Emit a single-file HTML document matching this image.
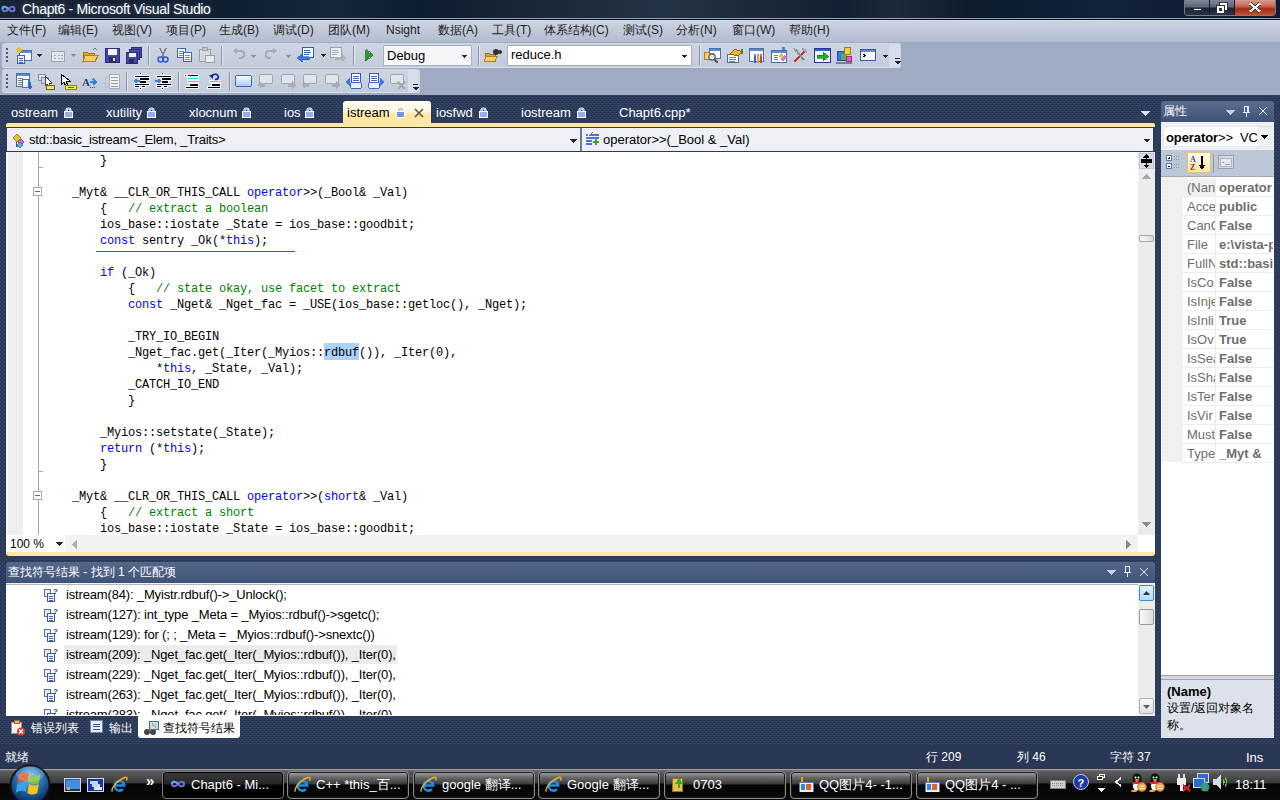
<!DOCTYPE html><html><head><meta charset="utf-8"><style>
*{margin:0;padding:0;box-sizing:border-box}
html,body{width:1280px;height:800px;overflow:hidden}
body{position:relative;background:#293955;font-family:"Liberation Sans",sans-serif;font-size:12px;color:#000}
.a{position:absolute;display:block}
svg{shape-rendering:crispEdges}
svg text,svg circle,svg ellipse{shape-rendering:auto}
.t{position:absolute;white-space:nowrap;line-height:14px}
.pat{background-color:#2b3b59;background-image:conic-gradient(at 1px 1px,transparent 75%,#3d4f72 0),conic-gradient(at 1px 1px,transparent 75%,#3d4f72 0),conic-gradient(at 1px 1px,transparent 75%,#25334f 0),conic-gradient(at 1px 1px,transparent 75%,#25334f 0);background-size:4px 4px;background-position:2px 0,0 2px,2px 3px,0 1px}
.code{position:absolute;left:38px;top:1px;font-family:"Liberation Mono",monospace;font-size:12px;letter-spacing:-0.2px;line-height:16px;white-space:pre;color:#000}
.k{color:#0000ff}.c{color:#008000}
.mi{position:absolute;top:23px;font-size:12px;color:#1e1e1e;white-space:nowrap;line-height:14px}
.tab{position:absolute;top:105px;color:#fff;font-size:13px;white-space:nowrap;line-height:15px}
</style></head><body>
<div class="a pat" style="left:0px;top:95px;width:1280px;height:673px;"></div>
<div class="a" style="left:0px;top:0px;width:1280px;height:18px;background:linear-gradient(90deg,#182536 0%,#111f32 18%,#172638 26%,#0f1d30 33%,#1d2b3d 45%,#243345 52%,#1a2839 60%,#122033 66%,#1c2a3b 70%,#0d1b2d 76%,#13213a 86%,#0f1c30 100%)"></div>
<div class="a" style="left:0px;top:18px;width:1280px;height:1px;background:#8e9cb0"></div>
<div class="a" style="left:0px;top:19px;width:1280px;height:1px;background:#0b1220"></div>
<svg class="a" style="left:0px;top:3px;shape-rendering:auto" width="18" height="12" viewBox="0 0 18 12"><path d="M2.5 6c0-3 3.5-3 6 0s6 3 6 0s-3.5-3-6 0s-6 3-6 0z" fill="none" stroke="#6a70d8" stroke-width="2"/><path d="M2.5 6c0-3 3.5-3 6 0" fill="none" stroke="#5aa8e8" stroke-width="2"/></svg>
<div class="t" style="left:22px;top:1px;color:#fff;font-size:14px;line-height:16px;letter-spacing:-0.35px;text-shadow:0 0 4px rgba(200,220,255,.35)">Chapt6 - Microsoft Visual Studio</div>
<div class="a" style="left:1184px;top:0px;width:92px;height:16px;border:1px solid #6c7a8e;border-top:none;border-radius:0 0 4px 4px;background:transparent"></div>
<div class="a" style="left:1185px;top:0px;width:24px;height:15px;background:linear-gradient(#7e8898 0%,#5c6677 45%,#1b2433 55%,#2b3546 100%);border-radius:0 0 0 3px"></div>
<div class="a" style="left:1193px;top:8px;width:9px;height:3px;background:#fff;border:1px solid #333"></div>
<div class="a" style="left:1210px;top:0px;width:24px;height:15px;background:linear-gradient(#7e8898 0%,#5c6677 45%,#1b2433 55%,#2b3546 100%)"></div>
<svg class="a" style="left:1215px;top:1px" width="14" height="13" viewBox="0 0 14 13"><rect x="4.5" y="1.5" width="8" height="8" fill="#fff" stroke="#333"/><rect x="1.5" y="4.5" width="8" height="8" fill="#fff" stroke="#333"/><rect x="4" y="7" width="3" height="3" fill="#333"/></svg>
<div class="a" style="left:1235px;top:0px;width:40px;height:15px;background:linear-gradient(#d99a8c 0%,#c46a55 40%,#a82a10 60%,#c45030 100%);border-radius:0 0 3px 0"></div>
<svg class="a" style="left:1248px;top:2px" width="14" height="11" viewBox="0 0 14 11"><path d="M2 1.5L12 9.5M12 1.5L2 9.5" stroke="#333" stroke-width="4"/><path d="M2 1.5L12 9.5M12 1.5L2 9.5" stroke="#fff" stroke-width="2.4"/></svg>
<div class="a" style="left:0px;top:20px;width:1280px;height:22px;background:linear-gradient(#d8deea 0,#cbd2e0 6%,#c3cbdb 40%,#b1bccf 100%)"></div>
<div class="mi" style="left:7px">文件(F)</div>
<div class="mi" style="left:58px">编辑(E)</div>
<div class="mi" style="left:112px">视图(V)</div>
<div class="mi" style="left:166px">项目(P)</div>
<div class="mi" style="left:219px">生成(B)</div>
<div class="mi" style="left:273px">调试(D)</div>
<div class="mi" style="left:328px">团队(M)</div>
<div class="mi" style="left:386px">Nsight</div>
<div class="mi" style="left:438px">数据(A)</div>
<div class="mi" style="left:492px">工具(T)</div>
<div class="mi" style="left:544px">体系结构(C)</div>
<div class="mi" style="left:623px">测试(S)</div>
<div class="mi" style="left:676px">分析(N)</div>
<div class="mi" style="left:732px">窗口(W)</div>
<div class="mi" style="left:789px">帮助(H)</div>
<div class="a" style="left:0px;top:42px;width:1280px;height:53px;background:#9eabc2"></div>
<div class="a" style="left:2px;top:43px;width:899px;height:25px;border-radius:3px;background:linear-gradient(#ced5e2,#c3cbda);box-shadow:inset 0 -1px 0 #d8dee8"></div>
<div class="a" style="left:889px;top:44px;width:11px;height:23px;background:#d8dee9;border-radius:0 3px 3px 0"></div>
<div class="a" style="left:2px;top:69px;width:418px;height:24px;border-radius:3px;background:linear-gradient(#ced5e2,#c3cbda);box-shadow:inset 0 -1px 0 #d8dee8"></div>
<div class="a" style="left:408px;top:70px;width:11px;height:22px;background:#d8dee9;border-radius:0 3px 3px 0"></div>
<div class="a" style="left:6px;top:48px;width:2px;height:2px;background:#4b5a74"></div>
<div class="a" style="left:6px;top:52px;width:2px;height:2px;background:#4b5a74"></div>
<div class="a" style="left:6px;top:56px;width:2px;height:2px;background:#4b5a74"></div>
<div class="a" style="left:6px;top:60px;width:2px;height:2px;background:#4b5a74"></div>
<div class="a" style="left:6px;top:74px;width:2px;height:2px;background:#4b5a74"></div>
<div class="a" style="left:6px;top:78px;width:2px;height:2px;background:#4b5a74"></div>
<div class="a" style="left:6px;top:82px;width:2px;height:2px;background:#4b5a74"></div>
<div class="a" style="left:6px;top:86px;width:2px;height:2px;background:#4b5a74"></div>
<svg class="a" style="left:16px;top:47px" width="17" height="17" viewBox="0 0 17 17"><rect x="3.5" y="3.5" width="12" height="10" fill="#fff" stroke="#4a6ea8"/><rect x="4" y="4" width="11" height="2" fill="#5b8ad6"/><path d="M1 1l4 4M5 1L1 5M3 0v6M0 3h6" stroke="#f0c020" stroke-width="1.2"/><rect x="1.5" y="8.5" width="7" height="8" fill="#e8f0ff" stroke="#3d64a8"/><path d="M3 11h4M3 13h4M3 15h4" stroke="#3d64a8"/></svg>
<svg class="a" style="left:37px;top:54px" width="5" height="3" viewBox="0 0 5 3"><path d="M0 0H5L2.5 3z" fill="#1e2a3c"/></svg>
<svg class="a" style="left:50px;top:48px" width="16" height="15" viewBox="0 0 16 15"><rect x="1.5" y="3.5" width="13" height="10" fill="#e4e6ea" stroke="#a0a6b0"/><path d="M4 7h2M8 7h2M11 7h2M4 10h2M8 10h2M11 10h2" stroke="#a0a6b0"/><path d="M1 0l3 3M4 0L1 3" stroke="#c8c8c8"/></svg>
<svg class="a" style="left:71px;top:54px" width="5" height="3" viewBox="0 0 5 3"><path d="M0 0H5L2.5 3z" fill="#8a93a3"/></svg>
<svg class="a" style="left:82px;top:47px" width="17" height="17" viewBox="0 0 17 17"><path d="M1.5 5.5h4l1 1h6v8h-11z" fill="#d9a53a" stroke="#a07020"/><path d="M3 8.5h13l-3 6H1z" fill="#f5cf6a" stroke="#b08028"/><path d="M11 3c1-2 3-2 4 0" stroke="#5a7ab0" fill="none"/></svg>
<svg class="a" style="left:105px;top:48px" width="15" height="15" viewBox="0 0 15 15"><rect x="0.5" y="0.5" width="14" height="14" fill="#4346a8" stroke="#2a2c78"/><rect x="3" y="1" width="9" height="6" fill="#f4f6ff"/><rect x="4" y="9" width="7" height="5" fill="#2b2d60"/><rect x="8" y="10" width="2" height="3" fill="#ddd"/></svg>
<svg class="a" style="left:126px;top:47px" width="16" height="17" viewBox="0 0 16 17"><rect x="5.5" y="0.5" width="10" height="10" fill="#4a4ea8" stroke="#2a2c78"/><rect x="3.5" y="2.5" width="10" height="10" fill="#4a4ea8" stroke="#2a2c78"/><rect x="0.5" y="5.5" width="11" height="11" fill="#4346a8" stroke="#2a2c78"/><rect x="2.5" y="6" width="7" height="4" fill="#f4f6ff"/><rect x="3" y="12" width="5" height="4" fill="#2b2d60"/></svg>
<div class="a" style="left:148px;top:46px;width:1px;height:19px;background:#8894a9"></div>
<div class="a" style="left:149px;top:46px;width:1px;height:19px;background:#e2e6ee"></div>
<svg class="a" style="left:157px;top:47px" width="12" height="16" viewBox="0 0 12 16"><path d="M3 1l4 9M9 1L5 10" stroke="#7a7f88" stroke-width="1.5"/><circle cx="3.5" cy="12.5" r="2.5" fill="none" stroke="#2f5fc8" stroke-width="1.6"/><circle cx="8.5" cy="12.5" r="2.5" fill="none" stroke="#2f5fc8" stroke-width="1.6"/></svg>
<svg class="a" style="left:177px;top:48px" width="16" height="14" viewBox="0 0 16 14"><rect x="0.5" y="0.5" width="8" height="9" fill="#fff" stroke="#3d64a8"/><path d="M2 3h5M2 5h5M2 7h5" stroke="#5b8ad6"/><rect x="6.5" y="4.5" width="8" height="9" fill="#fff" stroke="#3d64a8"/><path d="M8 7h5M8 9h5M8 11h5" stroke="#5b8ad6"/></svg>
<svg class="a" style="left:199px;top:47px" width="16" height="16" viewBox="0 0 16 16"><rect x="0.5" y="2.5" width="11" height="12" fill="#d6d8dc" stroke="#9aa0aa"/><rect x="3.5" y="0.5" width="5" height="3" fill="#c0c4ca" stroke="#9aa0aa"/><rect x="6.5" y="8.5" width="9" height="7" fill="#e8e9ec" stroke="#9aa0aa"/></svg>
<div class="a" style="left:221px;top:46px;width:1px;height:19px;background:#8894a9"></div>
<div class="a" style="left:222px;top:46px;width:1px;height:19px;background:#e2e6ee"></div>
<svg class="a" style="left:233px;top:48px;shape-rendering:auto" width="12" height="13" viewBox="0 0 12 13"><path d="M3 3h5a3.5 3.5 0 0 1 0 7h-2" fill="none" stroke="#a3a9b4" stroke-width="2.2"/><path d="M0 3l4-3v6z" fill="#a3a9b4"/></svg>
<svg class="a" style="left:251px;top:55px" width="5" height="3" viewBox="0 0 5 3"><path d="M0 0H5L2.5 3z" fill="#8a93a3"/></svg>
<svg class="a" style="left:265px;top:48px;shape-rendering:auto" width="12" height="13" viewBox="0 0 12 13"><path d="M9 3H4a3.5 3.5 0 0 0 0 7h2" fill="none" stroke="#a3a9b4" stroke-width="2.2"/><path d="M12 3l-4-3v6z" fill="#a3a9b4"/></svg>
<svg class="a" style="left:286px;top:55px" width="5" height="3" viewBox="0 0 5 3"><path d="M0 0H5L2.5 3z" fill="#8a93a3"/></svg>
<svg class="a" style="left:297px;top:47px" width="18" height="17" viewBox="0 0 18 17"><rect x="5.5" y="0.5" width="11" height="10" fill="#fff" stroke="#3a5a98"/><path d="M7 3h6M7 5h7M7 7h5" stroke="#3d64c8"/><path d="M0 11l5-4v2.5h7v3H5V15z" fill="#3b7be0" stroke="#1f4fa8" stroke-width=".6"/></svg>
<svg class="a" style="left:321px;top:54px" width="5" height="3" viewBox="0 0 5 3"><path d="M0 0H5L2.5 3z" fill="#1e2a3c"/></svg>
<svg class="a" style="left:330px;top:47px" width="17" height="17" viewBox="0 0 17 17"><rect x="0.5" y="0.5" width="11" height="10" fill="#eceef2" stroke="#9aa0aa"/><path d="M2 3h6M2 5h7M2 7h5" stroke="#a8aeb8"/><path d="M17 11l-5-4v2.5H5v3h7V15z" fill="#b0b6c0"/></svg>
<div class="a" style="left:353px;top:46px;width:1px;height:19px;background:#8894a9"></div>
<div class="a" style="left:354px;top:46px;width:1px;height:19px;background:#e2e6ee"></div>
<svg class="a" style="left:365px;top:49px" width="8" height="12" viewBox="0 0 8 12"><path d="M0.5 0.5L7.5 6 0.5 11.5z" fill="#2a9a2a" stroke="#17701a" stroke-width=".8"/></svg>
<div class="a" style="left:383px;top:45px;width:89px;height:21px;background:#f4f6fa;border:1px solid #a6b0c2;border-radius:1px"></div>
<div class="t" style="left:387px;top:49px;font-size:13px;line-height:14px">Debug</div>
<svg class="a" style="left:462px;top:55px" width="5" height="3" viewBox="0 0 5 3"><path d="M0 0H5L2.5 3z" fill="#1e2a3c"/></svg>
<div class="a" style="left:478px;top:46px;width:1px;height:19px;background:#8894a9"></div>
<div class="a" style="left:479px;top:46px;width:1px;height:19px;background:#e2e6ee"></div>
<svg class="a" style="left:484px;top:47px" width="18" height="17" viewBox="0 0 18 17"><path d="M1.5 6.5h4l1 1h5v7h-10z" fill="#d9a53a" stroke="#a07020"/><path d="M2 9.5h11l-2 5H0z" fill="#f5cf6a" stroke="#b08028"/><circle cx="12" cy="5" r="3" fill="#333"/><circle cx="16" cy="5" r="2" fill="#333"/></svg>
<div class="a" style="left:507px;top:45px;width:185px;height:21px;background:#fff;border:1px solid #a6b0c2;border-radius:1px"></div>
<div class="t" style="left:511px;top:48px;font-size:13px;line-height:14px">reduce.h</div>
<svg class="a" style="left:682px;top:55px" width="5" height="3" viewBox="0 0 5 3"><path d="M0 0H5L2.5 3z" fill="#1e2a3c"/></svg>
<div class="a" style="left:699px;top:46px;width:1px;height:19px;background:#8894a9"></div>
<div class="a" style="left:700px;top:46px;width:1px;height:19px;background:#e2e6ee"></div>
<svg class="a" style="left:704px;top:47px" width="18" height="17" viewBox="0 0 18 17"><rect x="5.5" y="1.5" width="11" height="10" fill="#fff" stroke="#4a6ea8"/><rect x="6" y="2" width="10" height="2" fill="#5b8ad6"/><path d="M0.5 5.5h4l1 1h4v6h-9z" fill="#f5cf6a" stroke="#b08028"/><circle cx="8" cy="10" r="3.2" fill="#d8ecff" stroke="#555" stroke-width="1.2"/><path d="M10 12l4 4" stroke="#555" stroke-width="2"/></svg>
<svg class="a" style="left:726px;top:47px" width="18" height="17" viewBox="0 0 18 17"><rect x="1.5" y="7.5" width="11" height="8" fill="#fff" stroke="#5a6c90"/><path d="M3 10h7M3 12h7M3 14h6" stroke="#6a7ca0"/><path d="M4 7l5-5 7 3-4 4z" fill="#e8b830" stroke="#906010"/><rect x="15" y="2" width="2" height="5" fill="#2a9a2a"/></svg>
<svg class="a" style="left:748px;top:47px" width="18" height="17" viewBox="0 0 18 17"><rect x="1.5" y="1.5" width="14" height="13" fill="#fff" stroke="#4a6ea8"/><rect x="2" y="2" width="13" height="2" fill="#5b8ad6"/><rect x="6" y="9" width="2" height="7" fill="#2b62d8"/><rect x="9" y="7" width="2" height="9" fill="#e0a020"/><rect x="12" y="9" width="2" height="7" fill="#d83a3a"/><circle cx="7" cy="8" r="1" fill="#2b62d8"/><circle cx="13" cy="8" r="1" fill="#d83a3a"/></svg>
<svg class="a" style="left:770px;top:47px" width="18" height="17" viewBox="0 0 18 17"><rect x="1.5" y="3.5" width="15" height="12" fill="#fff" stroke="#4a6ea8"/><rect x="2" y="4" width="14" height="2" fill="#5b8ad6"/><path d="M4 8h4M4 10h4M4 12h4" stroke="#6a7ca0"/><path d="M8 9l3-3 2 2-3 3z" fill="#e8c030"/><path d="M10 12l4-4 3 2-4 4z" fill="#e070d0"/><rect x="12" y="0" width="3" height="3" fill="#3a8ad8"/></svg>
<svg class="a" style="left:792px;top:47px" width="18" height="17" viewBox="0 0 18 17"><path d="M2 15L12 5" stroke="#c83030" stroke-width="2.5"/><path d="M3 2l9 11" stroke="#888" stroke-width="2"/><path d="M10 1c3 0 5 2 5 5l-3-1-2-2z" fill="#9aa2b0"/><path d="M1 1l3 1 1 3-2 0z" fill="#9aa2b0"/></svg>
<svg class="a" style="left:814px;top:47px" width="18" height="17" viewBox="0 0 18 17"><rect x="0.5" y="1.5" width="16" height="14" fill="#f4f6ff" stroke="#203c88"/><rect x="1" y="2" width="15" height="2" fill="#3560c0"/><path d="M3 8h6V5l6 4.5-6 4.5v-3H3z" fill="#22b022" stroke="#107010" stroke-width=".6"/></svg>
<svg class="a" style="left:836px;top:47px" width="18" height="17" viewBox="0 0 18 17"><rect x="1.5" y="4.5" width="8" height="9" fill="#3a7ad8" stroke="#2050a0"/><rect x="4.5" y="6.5" width="6" height="6" fill="#5ab04a"/><rect x="8.5" y="0.5" width="6" height="7" fill="#f0d040" stroke="#a08010"/><rect x="10.5" y="9.5" width="5" height="5" fill="#e060c0" stroke="#a03080"/><rect x="0" y="15" width="16" height="2" fill="#7a8090"/></svg>
<svg class="a" style="left:860px;top:47px" width="18" height="17" viewBox="0 0 18 17"><rect x="0.5" y="2.5" width="15" height="11" fill="#fff" stroke="#3a5a98"/><rect x="1" y="3" width="14" height="2" fill="#5b8ad6"/><path d="M3 7l2 1.5L3 10" stroke="#000" fill="none" stroke-width="1.2"/></svg>
<svg class="a" style="left:883px;top:55px" width="5" height="3" viewBox="0 0 5 3"><path d="M0 0H5L2.5 3z" fill="#1e2a3c"/></svg>
<svg class="a" style="left:894px;top:58px" width="7" height="7" viewBox="0 0 7 7"><rect x="1" y="0" width="5" height="1" fill="#1e2a3c"/><path d="M0 3h7L3.5 6.5z" fill="#1e2a3c"/></svg>
<svg class="a" style="left:16px;top:73px" width="18" height="17" viewBox="0 0 18 17"><rect x="0.5" y="0.5" width="13" height="13" fill="#fff" stroke="#4a6ea8"/><rect x="1" y="1" width="12" height="2" fill="#5b8ad6"/><path d="M2 5h5M2 7h5M2 9h5M2 11h4" stroke="#6a7ca0"/><rect x="6.5" y="6.5" width="6" height="8" fill="#f0f4ff" stroke="#4a6ea8"/><path d="M14 9v6M12 13l2 3 2-3" stroke="#2b62d8" stroke-width="1.3" fill="none"/></svg>
<svg class="a" style="left:38px;top:73px" width="18" height="17" viewBox="0 0 18 17"><rect x="0.5" y="1.5" width="7" height="6" fill="#dfe4ee" stroke="#8090a8"/><rect x="3.5" y="4.5" width="7" height="6" fill="#c8d0de" stroke="#8090a8"/><path d="M7 3v10l2.5-2 2 4 1.5-.7-2-4h3z" fill="#fff" stroke="#222" stroke-width=".8"/><rect x="8.5" y="12.5" width="8" height="4" fill="#f0e070" stroke="#6a6a20"/></svg>
<svg class="a" style="left:60px;top:73px" width="18" height="17" viewBox="0 0 18 17"><path d="M1 1v11l3-3 2 5 2-1-2-5h4z" fill="#fff" stroke="#000" stroke-width="1"/><rect x="5.5" y="12.5" width="11" height="4" fill="#f8f040" stroke="#8a8a10"/><rect x="8" y="14" width="6" height="1" fill="#3060c0"/></svg>
<svg class="a" style="left:82px;top:73px" width="18" height="17" viewBox="0 0 18 17"><text x="0" y="13" font-family="Liberation Serif" font-weight="bold" font-size="11" fill="#2a3a8a">A</text><path d="M8 9h6M11 6l3 3-3 3" stroke="#3a80e0" stroke-width="1.6" fill="none"/><path d="M8 14h1M10 14h1M12 14h1" stroke="#2a3a8a"/></svg>
<svg class="a" style="left:104px;top:73px" width="18" height="17" viewBox="0 0 18 17"><rect x="5.5" y="1.5" width="10" height="14" fill="#f0f0f2" stroke="#a8acb4"/><path d="M7 4h7M7 7h7M7 10h7M7 13h7" stroke="#9aa0aa"/><path d="M1 4h3M1 4v10h4" stroke="#b8bcc4" fill="none"/></svg>
<div class="a" style="left:126px;top:72px;width:1px;height:19px;background:#8894a9"></div>
<div class="a" style="left:127px;top:72px;width:1px;height:19px;background:#e2e6ee"></div>
<svg class="a" style="left:133px;top:73px" width="17" height="17" viewBox="0 0 17 17"><rect x="6" y="-1" width="3" height="3" fill="#fff" opacity=".75"/><rect x="6" y="14" width="3" height="3" fill="#fff" opacity=".75"/><rect x="1" y="2" width="16" height="3" fill="#fff" opacity=".75"/><rect x="6" y="4" width="11" height="4" fill="#fff" opacity=".75"/><rect x="6" y="7" width="8" height="4" fill="#fff" opacity=".75"/><rect x="1" y="10" width="16" height="3" fill="#fff" opacity=".75"/><rect x="1" y="12" width="6" height="3" fill="#fff" opacity=".75"/><rect x="8" y="12" width="5" height="3" fill="#fff" opacity=".75"/><rect x="7" y="0" width="1" height="1" fill="#000"/><rect x="7" y="15" width="1" height="1" fill="#000"/><rect x="2" y="3" width="14" height="1" fill="#000"/><rect x="7" y="5" width="9" height="2" fill="#000"/><rect x="7" y="8" width="6" height="2" fill="#000"/><rect x="2" y="11" width="14" height="1" fill="#000"/><rect x="2" y="13" width="4" height="1" fill="#000"/><rect x="9" y="13" width="3" height="1" fill="#000"/><path d="M0 8 L4 5.5 V7 H7 V9 H4 V10.5z" fill="#4a80e0"/></svg>
<svg class="a" style="left:155px;top:73px" width="17" height="17" viewBox="0 0 17 17"><rect x="6" y="-1" width="3" height="3" fill="#fff" opacity=".75"/><rect x="6" y="14" width="3" height="3" fill="#fff" opacity=".75"/><rect x="1" y="2" width="16" height="3" fill="#fff" opacity=".75"/><rect x="6" y="4" width="11" height="4" fill="#fff" opacity=".75"/><rect x="6" y="7" width="8" height="4" fill="#fff" opacity=".75"/><rect x="1" y="10" width="16" height="3" fill="#fff" opacity=".75"/><rect x="1" y="12" width="6" height="3" fill="#fff" opacity=".75"/><rect x="8" y="12" width="5" height="3" fill="#fff" opacity=".75"/><rect x="7" y="0" width="1" height="1" fill="#000"/><rect x="7" y="15" width="1" height="1" fill="#000"/><rect x="2" y="3" width="14" height="1" fill="#000"/><rect x="7" y="5" width="9" height="2" fill="#000"/><rect x="7" y="8" width="6" height="2" fill="#000"/><rect x="2" y="11" width="14" height="1" fill="#000"/><rect x="2" y="13" width="4" height="1" fill="#000"/><rect x="9" y="13" width="3" height="1" fill="#000"/><path d="M7 8 L3 5.5 V7 H0 V9 H3 V10.5z" fill="#4a80e0"/></svg>
<div class="a" style="left:178px;top:72px;width:1px;height:19px;background:#8894a9"></div>
<div class="a" style="left:179px;top:72px;width:1px;height:19px;background:#e2e6ee"></div>
<svg class="a" style="left:184px;top:73px" width="17" height="17" viewBox="0 0 17 17"><rect x="0" y="1" width="3" height="3" fill="#fff" opacity=".75"/><rect x="3" y="1" width="12" height="3" fill="#fff" opacity=".75"/><rect x="1" y="2" width="1" height="1" fill="#000"/><rect x="4" y="2" width="10" height="1" fill="#000"/><rect x="3" y="4" width="12" height="3" fill="#fff" opacity=".75"/><rect x="3" y="7" width="12" height="3" fill="#fff" opacity=".75"/><rect x="4" y="5" width="10" height="1" fill="#00e8f0"/><rect x="4" y="8" width="10" height="1" fill="#00e8f0"/><rect x="5" y="10" width="10" height="4" fill="#fff" opacity=".75"/><rect x="1" y="13" width="14" height="3" fill="#fff" opacity=".75"/><rect x="6" y="11" width="8" height="2" fill="#000"/><rect x="2" y="14" width="12" height="1" fill="#000"/></svg>
<svg class="a" style="left:206px;top:73px;shape-rendering:auto" width="17" height="17" viewBox="0 0 17 17"><rect x="3" y="7" width="12" height="3" fill="#fff" opacity=".75"/><rect x="4" y="8" width="10" height="1" fill="#00e8f0"/><rect x="5" y="10" width="10" height="4" fill="#fff" opacity=".75"/><rect x="1" y="13" width="14" height="3" fill="#fff" opacity=".75"/><rect x="6" y="11" width="8" height="2" fill="#000"/><rect x="2" y="14" width="12" height="1" fill="#000"/><path d="M6 3.5 A3.2 2.6 0 1 1 9 6.5" stroke="#1020a0" stroke-width="1.6" fill="none"/><path d="M3 2.5 L7 1.5 V6z" fill="#1020a0"/></svg>
<div class="a" style="left:229px;top:72px;width:1px;height:19px;background:#8894a9"></div>
<div class="a" style="left:230px;top:72px;width:1px;height:19px;background:#e2e6ee"></div>
<svg class="a" style="left:235px;top:74px" width="17" height="14" viewBox="0 0 17 14"><rect x="0.5" y="1.5" width="16" height="11" rx="2" fill="url(#gb)" stroke="#3a68c8"/><defs><linearGradient id="gb" x1="0" y1="0" x2="0" y2="1"><stop offset="0" stop-color="#fff"/><stop offset="1" stop-color="#a8c8f8"/></linearGradient></defs></svg>
<svg class="a" style="left:257px;top:73px" width="18" height="17" viewBox="0 0 18 17"><rect x="2.5" y="1.5" width="13" height="9" rx="2" fill="#e2e4e8" stroke="#a0a6b0"/><path d="M0 12l4-4v2h4v4H4v2z" fill="#a8aeb8"/></svg>
<svg class="a" style="left:279px;top:73px" width="18" height="17" viewBox="0 0 18 17"><rect x="2.5" y="1.5" width="13" height="9" rx="2" fill="#e2e4e8" stroke="#a0a6b0"/><path d="M17 12l-4-4v2H9v4h4v2z" fill="#a8aeb8"/></svg>
<svg class="a" style="left:301px;top:73px" width="18" height="17" viewBox="0 0 18 17"><rect x="2.5" y="1.5" width="13" height="9" rx="2" fill="#e2e4e8" stroke="#a0a6b0"/><path d="M0 12l4-4v2h4v4H4v2z" fill="#a8aeb8"/></svg>
<svg class="a" style="left:323px;top:73px" width="18" height="17" viewBox="0 0 18 17"><rect x="2.5" y="1.5" width="13" height="9" rx="2" fill="#e2e4e8" stroke="#a0a6b0"/><path d="M17 12l-4-4v2H9v4h4v2z" fill="#a8aeb8"/></svg>
<svg class="a" style="left:345px;top:73px" width="18" height="17" viewBox="0 0 18 17"><rect x="6.5" y="0.5" width="9" height="10" fill="#fff" stroke="#3a5a98"/><path d="M8 3h6M8 5h6M8 7h6" stroke="#3d64c8"/><rect x="5.5" y="9.5" width="11" height="6" rx="2" fill="#e8f0ff" stroke="#3a68c8"/><path d="M0 9l5-4v8z" fill="#3a7be0"/></svg>
<svg class="a" style="left:367px;top:73px" width="18" height="17" viewBox="0 0 18 17"><rect x="2.5" y="0.5" width="9" height="10" fill="#fff" stroke="#3a5a98"/><path d="M4 3h6M4 5h6M4 7h6" stroke="#3d64c8"/><rect x="1.5" y="9.5" width="11" height="6" rx="2" fill="#e8f0ff" stroke="#3a68c8"/><path d="M18 9l-5-4v8z" fill="#3a7be0"/></svg>
<svg class="a" style="left:389px;top:73px" width="18" height="17" viewBox="0 0 18 17"><rect x="1.5" y="1.5" width="13" height="9" rx="2" fill="#e2e4e8" stroke="#a0a6b0"/><path d="M9 9l7 7M16 9l-7 7" stroke="#a0a6b0" stroke-width="2"/></svg>
<svg class="a" style="left:412px;top:84px" width="7" height="7" viewBox="0 0 7 7"><rect x="1" y="0" width="5" height="1" fill="#1e2a3c"/><path d="M0 3h7L3.5 6.5z" fill="#1e2a3c"/></svg>
<div class="tab" style="left:11px">ostream</div>
<svg class="a" style="left:64px;top:107px;shape-rendering:auto" width="9" height="11" viewBox="0 0 9 11"><path d="M2.5 5V3.5a2 2 0 0 1 4 0V5" stroke="#fff" stroke-width="2.2" fill="none"/><path d="M2.5 5V3.5a2 2 0 0 1 4 0V5" stroke="#8fb0ea" stroke-width="1" fill="none"/><rect x="0.5" y="4.5" width="8" height="6" fill="#8fb0ea" stroke="#fff"/></svg>
<div class="tab" style="left:106px">xutility</div>
<svg class="a" style="left:147px;top:107px;shape-rendering:auto" width="9" height="11" viewBox="0 0 9 11"><path d="M2.5 5V3.5a2 2 0 0 1 4 0V5" stroke="#fff" stroke-width="2.2" fill="none"/><path d="M2.5 5V3.5a2 2 0 0 1 4 0V5" stroke="#8fb0ea" stroke-width="1" fill="none"/><rect x="0.5" y="4.5" width="8" height="6" fill="#8fb0ea" stroke="#fff"/></svg>
<div class="tab" style="left:189px">xlocnum</div>
<svg class="a" style="left:242px;top:107px;shape-rendering:auto" width="9" height="11" viewBox="0 0 9 11"><path d="M2.5 5V3.5a2 2 0 0 1 4 0V5" stroke="#fff" stroke-width="2.2" fill="none"/><path d="M2.5 5V3.5a2 2 0 0 1 4 0V5" stroke="#8fb0ea" stroke-width="1" fill="none"/><rect x="0.5" y="4.5" width="8" height="6" fill="#8fb0ea" stroke="#fff"/></svg>
<div class="tab" style="left:284px">ios</div>
<svg class="a" style="left:305px;top:107px;shape-rendering:auto" width="9" height="11" viewBox="0 0 9 11"><path d="M2.5 5V3.5a2 2 0 0 1 4 0V5" stroke="#fff" stroke-width="2.2" fill="none"/><path d="M2.5 5V3.5a2 2 0 0 1 4 0V5" stroke="#8fb0ea" stroke-width="1" fill="none"/><rect x="0.5" y="4.5" width="8" height="6" fill="#8fb0ea" stroke="#fff"/></svg>
<div class="tab" style="left:436px">iosfwd</div>
<svg class="a" style="left:479px;top:107px;shape-rendering:auto" width="9" height="11" viewBox="0 0 9 11"><path d="M2.5 5V3.5a2 2 0 0 1 4 0V5" stroke="#fff" stroke-width="2.2" fill="none"/><path d="M2.5 5V3.5a2 2 0 0 1 4 0V5" stroke="#8fb0ea" stroke-width="1" fill="none"/><rect x="0.5" y="4.5" width="8" height="6" fill="#8fb0ea" stroke="#fff"/></svg>
<div class="tab" style="left:521px">iostream</div>
<svg class="a" style="left:577px;top:107px;shape-rendering:auto" width="9" height="11" viewBox="0 0 9 11"><path d="M2.5 5V3.5a2 2 0 0 1 4 0V5" stroke="#fff" stroke-width="2.2" fill="none"/><path d="M2.5 5V3.5a2 2 0 0 1 4 0V5" stroke="#8fb0ea" stroke-width="1" fill="none"/><rect x="0.5" y="4.5" width="8" height="6" fill="#8fb0ea" stroke="#fff"/></svg>
<div class="tab" style="left:619px">Chapt6.cpp*</div>
<div class="a" style="left:343px;top:101px;width:88px;height:26px;border-radius:3px 3px 0 0;background:linear-gradient(#fffdf6 0%,#fff6dc 40%,#ffe8a6 52%,#ffe8a6 100%)"></div>
<div class="tab" style="left:347px;color:#000">istream</div>
<svg class="a" style="left:396px;top:107px;shape-rendering:auto" width="9" height="11" viewBox="0 0 9 11"><path d="M2.5 5V3.5a2 2 0 0 1 4 0V5" stroke="#fff" stroke-width="2.2" fill="none"/><path d="M2.5 5V3.5a2 2 0 0 1 4 0V5" stroke="#6f98e0" stroke-width="1" fill="none"/><rect x="0.5" y="4.5" width="8" height="6" fill="#6f98e0" stroke="#fff"/></svg>
<svg class="a" style="left:414px;top:108px;shape-rendering:auto" width="10" height="10" viewBox="0 0 10 10"><path d="M1 1l8 8M9 1L1 9" stroke="#5e5440" stroke-width="1.6"/></svg>
<svg class="a" style="left:1141px;top:111px" width="9" height="5" viewBox="0 0 9 5"><path d="M0 0h9L4.5 5z" fill="#dfe5ef"/></svg>
<div class="a" style="left:6px;top:123px;width:1149px;height:433px;background:#ffe8a6;border-radius:2px 2px 3px 3px"></div>
<div class="a" style="left:6px;top:127px;width:1149px;height:1px;background:#2c3b59"></div>
<div class="a" style="left:6px;top:128px;width:1149px;height:23px;background:#eef0f5"></div>
<div class="a" style="left:6px;top:151px;width:1149px;height:1px;background:#2c3b59"></div>
<div class="a" style="left:580px;top:128px;width:2px;height:23px;background:#717d92"></div>
<div class="a" style="left:1153px;top:128px;width:2px;height:23px;background:#2c3b59"></div>
<div class="a" style="left:6px;top:128px;width:1px;height:23px;background:#2c3b59"></div>
<svg class="a" style="left:12px;top:133px" width="16" height="15" viewBox="0 0 16 15"><path d="M1 5l4-4 4 4-4 4z" fill="#e8c028" stroke="#8a7010" stroke-width=".8"/><path d="M6 9l3-3 3 3-3 3z" fill="#d070d8" stroke="#803890" stroke-width=".8"/><path d="M5 12l3-3 3 3-3 3z" fill="#70a8e8" stroke="#3060a8" stroke-width=".8"/><path d="M4 9v4h2" stroke="#555" fill="none"/></svg>
<div class="t" style="left:29px;top:132px;font-size:13px;line-height:15px;letter-spacing:-0.2px">std::basic_istream&lt;_Elem, _Traits&gt;</div>
<svg class="a" style="left:570px;top:139px" width="7" height="4" viewBox="0 0 7 4"><path d="M0 0h7L3.5 4z" fill="#1e2a3c"/></svg>
<svg class="a" style="left:585px;top:131px" width="15" height="15" viewBox="0 0 15 15"><path d="M1 4h2M5 4h9M1 7h13M1 10h6M1 13h6" stroke="#4a78d8" stroke-width="1.2"/><path d="M4 5l4-4" stroke="#d84040" stroke-width="1.2"/><path d="M8 11h6M11 8v6" stroke="#40a040" stroke-width="1.4"/></svg>
<div class="t" style="left:603px;top:132px;font-size:13px;line-height:15px">operator&gt;&gt;(_Bool &amp; _Val)</div>
<svg class="a" style="left:1144px;top:139px" width="6" height="4" viewBox="0 0 6 4"><path d="M0 0h6L3 4z" fill="#1e2a3c"/></svg>
<div class="a" style="left:6px;top:152px;width:1132px;height:383px;background:#fff;overflow:hidden">
<div class="a" style="left:0px;top:0px;width:17px;height:383px;background:#efefef"></div>
<div class="a" style="left:1px;top:0px;width:1px;height:383px;background:#fafafa"></div>
<div class="a" style="left:32px;top:0px;width:1px;height:383px;background:#a8a8a8"></div>
<div class="a" style="left:32px;top:15px;width:5px;height:1px;background:#a8a8a8"></div>
<div class="a" style="left:32px;top:319px;width:5px;height:1px;background:#a8a8a8"></div>
<div class="a" style="left:27px;top:35px;width:9px;height:9px;background:#fff;border:1px solid #a8a8a8"></div>
<div class="a" style="left:29px;top:39px;width:5px;height:1px;background:#6a6a6a"></div>
<div class="a" style="left:27px;top:339px;width:9px;height:9px;background:#fff;border:1px solid #a8a8a8"></div>
<div class="a" style="left:29px;top:343px;width:5px;height:1px;background:#6a6a6a"></div>
<div class="a" style="left:318px;top:191px;width:35px;height:17px;background:#acd2fa"></div>
<div class="a" style="left:90px;top:99px;width:199px;height:1px;background:#f01c24"></div>
<div class="code">        }

    _Myt&amp; __CLR_OR_THIS_CALL <span class="k">operator</span>&gt;&gt;(_Bool&amp; _Val)
        {   <span class="c">// extract a boolean</span>
        ios_base::iostate _State = ios_base::goodbit;
        <span class="k">const</span> sentry _Ok(*<span class="k">this</span>);

        <span class="k">if</span> (_Ok)
            {   <span class="c">// state okay, use facet to extract</span>
            <span class="k">const</span> _Nget&amp; _Nget_fac = _USE(ios_base::getloc(), _Nget);

            _TRY_IO_BEGIN
            _Nget_fac.get(_Iter(_Myios::rdbuf()), _Iter(0),
                *<span class="k">this</span>, _State, _Val);
            _CATCH_IO_END
            }

        _Myios::setstate(_State);
        <span class="k">return</span> (*<span class="k">this</span>);
        }

    _Myt&amp; __CLR_OR_THIS_CALL <span class="k">operator</span>&gt;&gt;(<span class="k">short</span>&amp; _Val)
        {   <span class="c">// extract a short</span>
        ios_base::iostate _State = ios_base::goodbit;
</div>
</div>
<div class="a" style="left:1138px;top:152px;width:17px;height:383px;background:#ececec"></div>
<div class="a" style="left:1139px;top:153px;width:15px;height:16px;background:#d6dce8;border:1px solid #b8c2d4"></div>
<svg class="a" style="left:1140px;top:154px" width="13" height="14" viewBox="0 0 13 14"><path d="M1 6h11M1 8h11" stroke="#000" stroke-width="1.2"/><path d="M6.5 0L3.5 3.5h6zM6.5 14L3.5 10.5h6z" fill="#000"/><path d="M6.5 2v3M6.5 9v3" stroke="#000"/></svg>
<svg class="a" style="left:1142px;top:174px" width="9" height="5" viewBox="0 0 9 5"><path d="M4.5 0L9 5H0z" fill="#a8a8a8"/></svg>
<div class="a" style="left:1139px;top:235px;width:15px;height:7px;background:linear-gradient(90deg,#fafafa,#d8d8d8);border:1px solid #a8a8a8;border-radius:2px"></div>
<svg class="a" style="left:1142px;top:522px" width="9" height="5" viewBox="0 0 9 5"><path d="M0 0h9L4.5 5z" fill="#8a8a8a"/></svg>
<div class="a" style="left:6px;top:535px;width:1132px;height:17px;background:#f2f2f2"></div>
<div class="a" style="left:6px;top:535px;width:59px;height:17px;background:#fff"></div>
<div class="t" style="left:10px;top:537px;font-size:12px;line-height:14px">100 %</div>
<svg class="a" style="left:56px;top:542px" width="7" height="4" viewBox="0 0 7 4"><path d="M0 0h7L3.5 4z" fill="#1e2a3c"/></svg>
<svg class="a" style="left:72px;top:540px" width="5" height="9" viewBox="0 0 5 9"><path d="M5 0v9L0 4.5z" fill="#b0b0b0"/></svg>
<svg class="a" style="left:1126px;top:540px" width="5" height="9" viewBox="0 0 5 9"><path d="M0 0v9L5 4.5z" fill="#8a8a8a"/></svg>
<div class="a" style="left:1138px;top:535px;width:17px;height:17px;background:#fff"></div>
<div class="a" style="left:1161px;top:101px;width:113px;height:21px;border-radius:3px 3px 0 0;background:linear-gradient(#5a6d8f,#3f5377)"></div>
<div class="t" style="left:1163px;top:104px;color:#fff;font-size:12px;line-height:15px">属性</div>
<svg class="a" style="left:1226px;top:110px" width="9" height="5" viewBox="0 0 9 5"><path d="M0 0h9L4.5 5z" fill="#c8d0e0"/></svg>
<svg class="a" style="left:1242px;top:106px" width="9" height="11" viewBox="0 0 9 11"><path d="M2.5 0.5h4v6h-4zM1 6.5h7M4.5 6.5V11" stroke="#e6ebf3" fill="none"/><path d="M5.5 1v5" stroke="#e6ebf3"/></svg>
<svg class="a" style="left:1258px;top:106px" width="10" height="10" viewBox="0 0 10 10"><path d="M1 1l8 8M9 1L1 9" stroke="#e6ebf3" stroke-width="1.3"/></svg>
<div class="a" style="left:1161px;top:122px;width:113px;height:28px;background:#eef0f5"></div>
<div class="a" style="left:1163px;top:126px;width:108px;height:21px;background:#fff;border:1px solid #e2e6ee"></div>
<div class="t" style="left:1166px;top:130px;font-size:13px;line-height:15px;letter-spacing:-0.1px"><b>operator</b>&gt;&gt;&nbsp; VC</div>
<div class="a" style="left:1258px;top:127px;width:12px;height:19px;background:#f0f0f0"></div>
<svg class="a" style="left:1261px;top:135px" width="7" height="4" viewBox="0 0 7 4"><path d="M0 0h7L3.5 4z" fill="#000"/></svg>
<div class="a" style="left:1161px;top:150px;width:113px;height:27px;background:#bcc7d8"></div>
<div class="a" style="left:1161px;top:176px;width:113px;height:1px;background:#a0a8b8"></div>
<svg class="a" style="left:1166px;top:154px" width="17" height="17" viewBox="0 0 17 17"><rect x="0.5" y="1.5" width="5" height="5" fill="#fff" stroke="#5a7ab0"/><rect x="0.5" y="9.5" width="5" height="5" fill="#fff" stroke="#5a7ab0"/><path d="M2 4h2M3 3v2M2 12h2" stroke="#000"/><path d="M8 2h6M8 5h6M8 10h6M8 13h6" stroke="#8a9aa0" stroke-dasharray="1 1"/></svg>
<div class="a" style="left:1187px;top:152px;width:24px;height:21px;background:linear-gradient(#fffcf0,#ffe6a0);border:1px solid #e6c06a"></div>
<svg class="a" style="left:1189px;top:154px" width="20" height="17" viewBox="0 0 20 17"><text x="1" y="8" font-family="Liberation Serif" font-weight="bold" font-size="8" fill="#2850b0">A</text><text x="1" y="16" font-family="Liberation Serif" font-weight="bold" font-size="8" fill="#a02030">Z</text><path d="M13 2v12M10.5 11l2.5 4 2.5-4" stroke="#000" stroke-width="1.2" fill="none"/></svg>
<div class="a" style="left:1213px;top:154px;width:1px;height:19px;background:#8a96aa"></div>
<svg class="a" style="left:1218px;top:155px" width="17" height="15" viewBox="0 0 17 15"><rect x="0.5" y="0.5" width="15" height="13" fill="#d8dade" stroke="#9aa0aa"/><rect x="2.5" y="3.5" width="11" height="8" fill="#e8e9ec" stroke="#b0b4ba"/><path d="M4 7h2M7 9h5" stroke="#a0a4aa"/></svg>
<div class="a" style="left:1161px;top:177px;width:113px;height:498px;background:#fff"></div>
<div class="a" style="left:1162px;top:177px;width:21px;height:285px;background:#f0f0f0"></div>
<div class="a" style="left:1183px;top:178px;width:33px;height:18px;background:#f0f0f0"></div>
<div class="a" style="left:1183px;top:196px;width:90px;height:1px;background:#ececec"></div>
<div class="t" style="left:1187px;top:180px;width:29px;overflow:hidden;color:#6d6d6d;font-size:13px;line-height:15px">(Nan</div>
<div class="t" style="left:1219px;top:180px;width:54px;overflow:hidden;color:#6d6d6d;font-size:13px;line-height:15px;font-weight:bold">operator</div>
<div class="a" style="left:1183px;top:215px;width:90px;height:1px;background:#ececec"></div>
<div class="t" style="left:1187px;top:199px;width:29px;overflow:hidden;color:#6d6d6d;font-size:13px;line-height:15px">Acce</div>
<div class="t" style="left:1219px;top:199px;width:54px;overflow:hidden;color:#6d6d6d;font-size:13px;line-height:15px;font-weight:bold">public</div>
<div class="a" style="left:1183px;top:234px;width:90px;height:1px;background:#ececec"></div>
<div class="t" style="left:1187px;top:218px;width:29px;overflow:hidden;color:#6d6d6d;font-size:13px;line-height:15px">CanC</div>
<div class="t" style="left:1219px;top:218px;width:54px;overflow:hidden;color:#6d6d6d;font-size:13px;line-height:15px;font-weight:bold">False</div>
<div class="a" style="left:1183px;top:253px;width:90px;height:1px;background:#ececec"></div>
<div class="t" style="left:1187px;top:237px;width:29px;overflow:hidden;color:#6d6d6d;font-size:13px;line-height:15px">File</div>
<div class="t" style="left:1219px;top:237px;width:54px;overflow:hidden;color:#6d6d6d;font-size:13px;line-height:15px;font-weight:bold">e:\vista-p</div>
<div class="a" style="left:1183px;top:272px;width:90px;height:1px;background:#ececec"></div>
<div class="t" style="left:1187px;top:256px;width:29px;overflow:hidden;color:#6d6d6d;font-size:13px;line-height:15px">FullN</div>
<div class="t" style="left:1219px;top:256px;width:54px;overflow:hidden;color:#6d6d6d;font-size:13px;line-height:15px;font-weight:bold">std::basic</div>
<div class="a" style="left:1183px;top:291px;width:90px;height:1px;background:#ececec"></div>
<div class="t" style="left:1187px;top:275px;width:29px;overflow:hidden;color:#6d6d6d;font-size:13px;line-height:15px">IsCo</div>
<div class="t" style="left:1219px;top:275px;width:54px;overflow:hidden;color:#6d6d6d;font-size:13px;line-height:15px;font-weight:bold">False</div>
<div class="a" style="left:1183px;top:310px;width:90px;height:1px;background:#ececec"></div>
<div class="t" style="left:1187px;top:294px;width:29px;overflow:hidden;color:#6d6d6d;font-size:13px;line-height:15px">IsInje</div>
<div class="t" style="left:1219px;top:294px;width:54px;overflow:hidden;color:#6d6d6d;font-size:13px;line-height:15px;font-weight:bold">False</div>
<div class="a" style="left:1183px;top:329px;width:90px;height:1px;background:#ececec"></div>
<div class="t" style="left:1187px;top:313px;width:29px;overflow:hidden;color:#6d6d6d;font-size:13px;line-height:15px">IsInli</div>
<div class="t" style="left:1219px;top:313px;width:54px;overflow:hidden;color:#6d6d6d;font-size:13px;line-height:15px;font-weight:bold">True</div>
<div class="a" style="left:1183px;top:348px;width:90px;height:1px;background:#ececec"></div>
<div class="t" style="left:1187px;top:332px;width:29px;overflow:hidden;color:#6d6d6d;font-size:13px;line-height:15px">IsOv</div>
<div class="t" style="left:1219px;top:332px;width:54px;overflow:hidden;color:#6d6d6d;font-size:13px;line-height:15px;font-weight:bold">True</div>
<div class="a" style="left:1183px;top:367px;width:90px;height:1px;background:#ececec"></div>
<div class="t" style="left:1187px;top:351px;width:29px;overflow:hidden;color:#6d6d6d;font-size:13px;line-height:15px">IsSea</div>
<div class="t" style="left:1219px;top:351px;width:54px;overflow:hidden;color:#6d6d6d;font-size:13px;line-height:15px;font-weight:bold">False</div>
<div class="a" style="left:1183px;top:386px;width:90px;height:1px;background:#ececec"></div>
<div class="t" style="left:1187px;top:370px;width:29px;overflow:hidden;color:#6d6d6d;font-size:13px;line-height:15px">IsSha</div>
<div class="t" style="left:1219px;top:370px;width:54px;overflow:hidden;color:#6d6d6d;font-size:13px;line-height:15px;font-weight:bold">False</div>
<div class="a" style="left:1183px;top:405px;width:90px;height:1px;background:#ececec"></div>
<div class="t" style="left:1187px;top:389px;width:29px;overflow:hidden;color:#6d6d6d;font-size:13px;line-height:15px">IsTer</div>
<div class="t" style="left:1219px;top:389px;width:54px;overflow:hidden;color:#6d6d6d;font-size:13px;line-height:15px;font-weight:bold">False</div>
<div class="a" style="left:1183px;top:424px;width:90px;height:1px;background:#ececec"></div>
<div class="t" style="left:1187px;top:408px;width:29px;overflow:hidden;color:#6d6d6d;font-size:13px;line-height:15px">IsVir</div>
<div class="t" style="left:1219px;top:408px;width:54px;overflow:hidden;color:#6d6d6d;font-size:13px;line-height:15px;font-weight:bold">False</div>
<div class="a" style="left:1183px;top:443px;width:90px;height:1px;background:#ececec"></div>
<div class="t" style="left:1187px;top:427px;width:29px;overflow:hidden;color:#6d6d6d;font-size:13px;line-height:15px">Must</div>
<div class="t" style="left:1219px;top:427px;width:54px;overflow:hidden;color:#6d6d6d;font-size:13px;line-height:15px;font-weight:bold">False</div>
<div class="a" style="left:1183px;top:462px;width:90px;height:1px;background:#ececec"></div>
<div class="t" style="left:1187px;top:446px;width:29px;overflow:hidden;color:#6d6d6d;font-size:13px;line-height:15px">Type</div>
<div class="t" style="left:1219px;top:446px;width:54px;overflow:hidden;color:#6d6d6d;font-size:13px;line-height:15px;font-weight:bold">_Myt &amp;</div>
<div class="a" style="left:1215px;top:178px;width:1px;height:284px;background:#ececec"></div>
<div class="a" style="left:1161px;top:675px;width:113px;height:1px;background:#a0a4ac"></div>
<div class="a" style="left:1161px;top:676px;width:113px;height:3px;background:#d4d8e0"></div>
<div class="a" style="left:1161px;top:679px;width:113px;height:1px;background:#a0a4ac"></div>
<div class="a" style="left:1161px;top:680px;width:113px;height:58px;background:#dde1ea"></div>
<div class="t" style="left:1167px;top:684px;font-weight:bold;font-size:13px;line-height:15px">(Name)</div>
<div class="t" style="left:1167px;top:701px;font-size:12px;line-height:15px">设置/返回对象名</div>
<div class="t" style="left:1167px;top:718px;font-size:12px;line-height:15px">称。</div>
<div class="a" style="left:6px;top:562px;width:1149px;height:21px;border-radius:3px 3px 0 0;background:linear-gradient(#55688b,#3f5378)"></div>
<div class="t" style="left:8px;top:565px;color:#fff;font-size:12px;line-height:15px">查找符号结果 - 找到 1 个匹配项</div>
<svg class="a" style="left:1107px;top:570px" width="9" height="5" viewBox="0 0 9 5"><path d="M0 0h9L4.5 5z" fill="#c8d0e0"/></svg>
<svg class="a" style="left:1123px;top:566px" width="9" height="11" viewBox="0 0 9 11"><path d="M2.5 0.5h4v6h-4zM1 6.5h7M4.5 6.5V11" stroke="#e6ebf3" fill="none"/></svg>
<svg class="a" style="left:1139px;top:567px" width="10" height="10" viewBox="0 0 10 10"><path d="M1 1l8 8M9 1L1 9" stroke="#e6ebf3" stroke-width="1.3"/></svg>
<div class="a" style="left:6px;top:583px;width:1149px;height:1px;background:#f2f2f2"></div>
<div class="a" style="left:6px;top:584px;width:1149px;height:132px;background:#fff"></div>
<div class="a" style="left:6px;top:584px;width:1132px;height:1px;background:#b4b4b4"></div>
<div class="a" style="left:6px;top:584px;width:1132px;height:131px;overflow:hidden">
<div class="a" style="left:58px;top:61px;width:333px;height:19px;background:#ececec"></div>
<svg class="a" style="left:38px;top:3px" width="14" height="16" viewBox="0 0 14 16"><rect x="0.5" y="2.5" width="6" height="7" fill="#e8eef8" stroke="#5a6ea0"/><rect x="3.5" y="6.5" width="7" height="8" fill="#f4f8ff" stroke="#3d5ca0"/><path d="M5 9h4M5 11h4M5 13h4" stroke="#3d64c8"/><text x="9" y="7" font-family="Liberation Sans" font-weight="bold" font-size="8" fill="#2a3a8a">?</text></svg>
<div class="t" style="left:60px;top:3px;font-size:13px;line-height:15px;letter-spacing:-0.16px">istream(84): _Myistr.rdbuf()-&gt;_Unlock();</div>
<svg class="a" style="left:38px;top:23px" width="14" height="16" viewBox="0 0 14 16"><rect x="0.5" y="2.5" width="6" height="7" fill="#e8eef8" stroke="#5a6ea0"/><rect x="3.5" y="6.5" width="7" height="8" fill="#f4f8ff" stroke="#3d5ca0"/><path d="M5 9h4M5 11h4M5 13h4" stroke="#3d64c8"/><text x="9" y="7" font-family="Liberation Sans" font-weight="bold" font-size="8" fill="#2a3a8a">?</text></svg>
<div class="t" style="left:60px;top:23px;font-size:13px;line-height:15px;letter-spacing:-0.16px">istream(127): int_type _Meta = _Myios::rdbuf()-&gt;sgetc();</div>
<svg class="a" style="left:38px;top:43px" width="14" height="16" viewBox="0 0 14 16"><rect x="0.5" y="2.5" width="6" height="7" fill="#e8eef8" stroke="#5a6ea0"/><rect x="3.5" y="6.5" width="7" height="8" fill="#f4f8ff" stroke="#3d5ca0"/><path d="M5 9h4M5 11h4M5 13h4" stroke="#3d64c8"/><text x="9" y="7" font-family="Liberation Sans" font-weight="bold" font-size="8" fill="#2a3a8a">?</text></svg>
<div class="t" style="left:60px;top:43px;font-size:13px;line-height:15px;letter-spacing:-0.16px">istream(129): for (; ; _Meta = _Myios::rdbuf()-&gt;snextc())</div>
<svg class="a" style="left:38px;top:63px" width="14" height="16" viewBox="0 0 14 16"><rect x="0.5" y="2.5" width="6" height="7" fill="#e8eef8" stroke="#5a6ea0"/><rect x="3.5" y="6.5" width="7" height="8" fill="#f4f8ff" stroke="#3d5ca0"/><path d="M5 9h4M5 11h4M5 13h4" stroke="#3d64c8"/><text x="9" y="7" font-family="Liberation Sans" font-weight="bold" font-size="8" fill="#2a3a8a">?</text></svg>
<div class="t" style="left:60px;top:63px;font-size:13px;line-height:15px;letter-spacing:-0.16px">istream(209): _Nget_fac.get(_Iter(_Myios::rdbuf()), _Iter(0),</div>
<svg class="a" style="left:38px;top:83px" width="14" height="16" viewBox="0 0 14 16"><rect x="0.5" y="2.5" width="6" height="7" fill="#e8eef8" stroke="#5a6ea0"/><rect x="3.5" y="6.5" width="7" height="8" fill="#f4f8ff" stroke="#3d5ca0"/><path d="M5 9h4M5 11h4M5 13h4" stroke="#3d64c8"/><text x="9" y="7" font-family="Liberation Sans" font-weight="bold" font-size="8" fill="#2a3a8a">?</text></svg>
<div class="t" style="left:60px;top:83px;font-size:13px;line-height:15px;letter-spacing:-0.16px">istream(229): _Nget_fac.get(_Iter(_Myios::rdbuf()), _Iter(0),</div>
<svg class="a" style="left:38px;top:103px" width="14" height="16" viewBox="0 0 14 16"><rect x="0.5" y="2.5" width="6" height="7" fill="#e8eef8" stroke="#5a6ea0"/><rect x="3.5" y="6.5" width="7" height="8" fill="#f4f8ff" stroke="#3d5ca0"/><path d="M5 9h4M5 11h4M5 13h4" stroke="#3d64c8"/><text x="9" y="7" font-family="Liberation Sans" font-weight="bold" font-size="8" fill="#2a3a8a">?</text></svg>
<div class="t" style="left:60px;top:103px;font-size:13px;line-height:15px;letter-spacing:-0.16px">istream(263): _Nget_fac.get(_Iter(_Myios::rdbuf()), _Iter(0),</div>
<svg class="a" style="left:38px;top:123px" width="14" height="16" viewBox="0 0 14 16"><rect x="0.5" y="2.5" width="6" height="7" fill="#e8eef8" stroke="#5a6ea0"/><rect x="3.5" y="6.5" width="7" height="8" fill="#f4f8ff" stroke="#3d5ca0"/><path d="M5 9h4M5 11h4M5 13h4" stroke="#3d64c8"/><text x="9" y="7" font-family="Liberation Sans" font-weight="bold" font-size="8" fill="#2a3a8a">?</text></svg>
<div class="t" style="left:60px;top:123px;font-size:13px;line-height:15px;letter-spacing:-0.16px">istream(283): _Nget_fac.get(_Iter(_Myios::rdbuf()), _Iter(0),</div>
</div>
<div class="a" style="left:1138px;top:584px;width:17px;height:132px;background:#ececec"></div>
<div class="a" style="left:1139px;top:585px;width:15px;height:16px;background:linear-gradient(#e4f2fc,#b8dcf4);border:1px solid #3a8ac8;border-radius:2px"></div>
<svg class="a" style="left:1143px;top:591px;shape-rendering:auto" width="7" height="4" viewBox="0 0 7 4"><path d="M3.5 0L7 4H0z" fill="#1c3658"/></svg>
<div class="a" style="left:1139px;top:609px;width:15px;height:16px;background:linear-gradient(90deg,#fbfbfb,#dcdcdc);border:1px solid #9a9a9a;border-radius:2px"></div>
<div class="a" style="left:1139px;top:698px;width:15px;height:16px;background:linear-gradient(#fafafa,#e0e0e0);border:1px solid #b0b0b0;border-radius:2px"></div>
<svg class="a" style="left:1143px;top:705px;shape-rendering:auto" width="7" height="4" viewBox="0 0 7 4"><path d="M0 0h7L3.5 4z" fill="#606060"/></svg>
<div class="a" style="left:138px;top:716px;width:102px;height:22px;background:#fff;border-radius:0 0 3px 3px"></div>
<svg class="a" style="left:10px;top:719px" width="16" height="17" viewBox="0 0 16 17"><rect x="1.5" y="3.5" width="10" height="11" fill="#f0f0f0" stroke="#909090"/><rect x="4" y="1.5" width="5" height="3" fill="#e0c070" stroke="#907020"/><circle cx="11" cy="12.5" r="4" fill="#e04020"/><path d="M9 10.5l4 4M13 10.5l-4 4" stroke="#fff" stroke-width="1.2"/></svg>
<div class="t" style="left:31px;top:721px;color:#fff;font-size:12px;line-height:15px">错误列表</div>
<svg class="a" style="left:90px;top:720px" width="13" height="13" viewBox="0 0 13 13"><rect x="0.5" y="0.5" width="12" height="12" fill="#e8eefa" stroke="#6a80b0"/><path d="M3 4h7M3 6.5h7M3 9h7" stroke="#3a5090"/></svg>
<div class="t" style="left:109px;top:721px;color:#fff;font-size:12px;line-height:15px">输出</div>
<svg class="a" style="left:143px;top:719px" width="16" height="17" viewBox="0 0 16 17"><circle cx="4" cy="13" r="3" fill="#444"/><circle cx="10" cy="13" r="3" fill="#444"/><rect x="6" y="2.5" width="9" height="8" fill="#c8daf4" stroke="#3a68c8"/><path d="M9 5l4 3" stroke="#e0b020" stroke-width="2"/></svg>
<div class="t" style="left:163px;top:721px;font-size:12px;line-height:15px">查找符号结果</div>
<div class="a" style="left:0px;top:744px;width:1280px;height:25px;background:#293754"></div>
<div class="t" style="left:5px;top:750px;color:#fff;font-size:12px;line-height:15px">就绪</div>
<div class="t" style="left:926px;top:750px;color:#fff;font-size:12px;line-height:15px">行 209</div>
<div class="t" style="left:1017px;top:750px;color:#fff;font-size:12px;line-height:15px">列 46</div>
<div class="t" style="left:1110px;top:750px;color:#fff;font-size:12px;line-height:15px">字符 37</div>
<div class="t" style="left:1246px;top:750px;color:#fff;font-size:13px;line-height:15px">Ins</div>
<div class="a" style="left:0px;top:769px;width:1280px;height:31px;background:linear-gradient(#7a7a7a 0%,#5a5a5a 10%,#3a3a3a 45%,#050505 48%,#0a0a0a 100%)"></div>
<div class="a" style="left:0px;top:769px;width:1280px;height:1px;background:#a0a0a0"></div>
<svg class="a" style="left:8px;top:763px;shape-rendering:auto" width="44" height="37" viewBox="0 0 44 37"><defs><radialGradient id="orb" cx="50%" cy="30%" r="65%"><stop offset="0" stop-color="#8ac8f0"/><stop offset="0.45" stop-color="#2a78b8"/><stop offset="1" stop-color="#0a3060"/></radialGradient></defs><circle cx="22" cy="22" r="19.5" fill="url(#orb)" stroke="#101418" stroke-width="2"/><path d="M11 12q5-4 10-1l-1.5 8q-5-3-10 1z" fill="#f05a28"/><path d="M22.5 11q5 3 10 0l-1.5 9q-5 3-10 0z" fill="#7ac043"/><path d="M9.2 21q5-4 10-1l-1.5 9q-5-3-10 1z" fill="#3aa0e8"/><path d="M20.8 21q5 3 10 0l-1.5 9q-5 3-10 0z" fill="#f8c020"/><ellipse cx="22" cy="11" rx="14" ry="8" fill="#fff" opacity=".18"/></svg>
<svg class="a" style="left:64px;top:778px" width="17" height="14" viewBox="0 0 17 14"><rect x="0.5" y="0.5" width="16" height="13" fill="#2a5ab8" stroke="#d0d8e8"/><rect x="1.5" y="1.5" width="14" height="9" fill="#4a8ae0"/><rect x="1" y="11" width="15" height="2" fill="#333"/><rect x="3" y="9" width="3" height="3" fill="#e8a030"/></svg>
<svg class="a" style="left:87px;top:778px" width="17" height="14" viewBox="0 0 17 14"><rect x="0.5" y="0.5" width="16" height="13" fill="#1a3a98" stroke="#d0d8e8"/><rect x="3" y="3" width="8" height="3" fill="#c0d8f0"/><rect x="5" y="6" width="8" height="3" fill="#c0d8f0"/><rect x="7" y="9" width="8" height="3" fill="#e0e8f8"/></svg>
<svg class="a" style="left:111px;top:776px;shape-rendering:auto" width="17" height="17" viewBox="0 0 17 17"><path d="M3.8 9.5h9.4a4.8 4.8 0 1 0 -1.3 3.6" stroke="#1e8ae6" stroke-width="2.6" fill="none"/><path d="M1.5 15.5c-2-2 3-9 9-12.5s6-1 5 1.5" stroke="#f0b020" stroke-width="1.5" fill="none"/></svg>
<div class="t" style="left:146px;top:773px;color:#fff;font-size:15px;line-height:15px;font-weight:bold">»</div>
<div class="a" style="left:162px;top:771px;width:122px;height:28px;border:1px solid #7a7a7a;border-radius:4px;background:linear-gradient(#3a3a3a 0%,#262626 46%,#040404 50%,#000 100%);box-shadow:inset 0 0 0 1px #000"></div>
<svg class="a" style="left:170px;top:779px;shape-rendering:auto" width="16" height="10" viewBox="0 0 16 10"><path d="M2 5c0-3 4-3 6 0s6 3 6 0s-4-3-6 0s-6 3-6 0z" fill="none" stroke="#6a70d8" stroke-width="2"/><path d="M2 5c0-3 4-3 6 0" fill="none" stroke="#5aa8e8" stroke-width="2"/></svg>
<div class="t" style="left:191px;top:777px;color:#fff;font-size:13px;line-height:15px">Chapt6 - Mi...</div>
<div class="a" style="left:287px;top:771px;width:122px;height:28px;border:1px solid #8a8a8a;border-radius:4px;background:linear-gradient(#a8a8a8 0%,#6a6a6a 20%,#3c3c3c 46%,#060606 50%,#080808 100%);box-shadow:inset 0 0 0 1px #1a1a1a"></div>
<svg class="a" style="left:294px;top:776px;shape-rendering:auto" width="17" height="17" viewBox="0 0 17 17"><path d="M3.8 9.5h9.4a4.8 4.8 0 1 0 -1.3 3.6" stroke="#1e8ae6" stroke-width="2.6" fill="none"/><path d="M1.5 15.5c-2-2 3-9 9-12.5s6-1 5 1.5" stroke="#f0b020" stroke-width="1.5" fill="none"/></svg>
<div class="t" style="left:316px;top:777px;color:#fff;font-size:13px;line-height:15px">C++ *this_百...</div>
<div class="a" style="left:413px;top:771px;width:122px;height:28px;border:1px solid #8a8a8a;border-radius:4px;background:linear-gradient(#a8a8a8 0%,#6a6a6a 20%,#3c3c3c 46%,#060606 50%,#080808 100%);box-shadow:inset 0 0 0 1px #1a1a1a"></div>
<svg class="a" style="left:420px;top:776px;shape-rendering:auto" width="17" height="17" viewBox="0 0 17 17"><path d="M3.8 9.5h9.4a4.8 4.8 0 1 0 -1.3 3.6" stroke="#1e8ae6" stroke-width="2.6" fill="none"/><path d="M1.5 15.5c-2-2 3-9 9-12.5s6-1 5 1.5" stroke="#f0b020" stroke-width="1.5" fill="none"/></svg>
<div class="t" style="left:442px;top:777px;color:#fff;font-size:13px;line-height:15px">google 翻译...</div>
<div class="a" style="left:538px;top:771px;width:122px;height:28px;border:1px solid #8a8a8a;border-radius:4px;background:linear-gradient(#a8a8a8 0%,#6a6a6a 20%,#3c3c3c 46%,#060606 50%,#080808 100%);box-shadow:inset 0 0 0 1px #1a1a1a"></div>
<svg class="a" style="left:545px;top:776px;shape-rendering:auto" width="17" height="17" viewBox="0 0 17 17"><path d="M3.8 9.5h9.4a4.8 4.8 0 1 0 -1.3 3.6" stroke="#1e8ae6" stroke-width="2.6" fill="none"/><path d="M1.5 15.5c-2-2 3-9 9-12.5s6-1 5 1.5" stroke="#f0b020" stroke-width="1.5" fill="none"/></svg>
<div class="t" style="left:567px;top:777px;color:#fff;font-size:13px;line-height:15px">Google 翻译...</div>
<div class="a" style="left:664px;top:771px;width:122px;height:28px;border:1px solid #8a8a8a;border-radius:4px;background:linear-gradient(#a8a8a8 0%,#6a6a6a 20%,#3c3c3c 46%,#060606 50%,#080808 100%);box-shadow:inset 0 0 0 1px #1a1a1a"></div>
<svg class="a" style="left:672px;top:776px" width="14" height="16" viewBox="0 0 14 16"><rect x="0.5" y="2.5" width="10" height="13" fill="#e8c050" stroke="#a07010"/><path d="M7 12V5M4 8l3-4 3 4" stroke="#30b030" stroke-width="2" fill="none"/></svg>
<div class="t" style="left:693px;top:777px;color:#fff;font-size:13px;line-height:15px">0703</div>
<div class="a" style="left:790px;top:771px;width:122px;height:28px;border:1px solid #8a8a8a;border-radius:4px;background:linear-gradient(#a8a8a8 0%,#6a6a6a 20%,#3c3c3c 46%,#060606 50%,#080808 100%);box-shadow:inset 0 0 0 1px #1a1a1a"></div>
<svg class="a" style="left:798px;top:776px" width="16" height="16" viewBox="0 0 16 16"><rect x="1" y="6" width="14" height="10" fill="#f0f0f0" stroke="#5a7ab0"/><rect x="3" y="8" width="4" height="6" fill="#2a8ae0"/><rect x="8" y="8" width="5" height="6" fill="#e06030"/><path d="M4 1v5" stroke="#e8a020" stroke-width="2"/></svg>
<div class="t" style="left:819px;top:777px;color:#fff;font-size:13px;line-height:15px">QQ图片4- -1...</div>
<div class="a" style="left:916px;top:771px;width:122px;height:28px;border:1px solid #8a8a8a;border-radius:4px;background:linear-gradient(#a8a8a8 0%,#6a6a6a 20%,#3c3c3c 46%,#060606 50%,#080808 100%);box-shadow:inset 0 0 0 1px #1a1a1a"></div>
<svg class="a" style="left:924px;top:776px" width="16" height="16" viewBox="0 0 16 16"><rect x="1" y="6" width="14" height="10" fill="#f0f0f0" stroke="#5a7ab0"/><rect x="3" y="8" width="4" height="6" fill="#2a8ae0"/><rect x="8" y="8" width="5" height="6" fill="#e06030"/><path d="M4 1v5" stroke="#e8a020" stroke-width="2"/></svg>
<div class="t" style="left:945px;top:777px;color:#fff;font-size:13px;line-height:15px">QQ图片4 - ...</div>
<svg class="a" style="left:1050px;top:777px" width="16" height="12" viewBox="0 0 16 12"><rect x="0.5" y="3.5" width="15" height="8" fill="#d0d0d0" stroke="#808080"/><path d="M2 6h12M2 8h12" stroke="#888" stroke-dasharray="1 1"/></svg>
<svg class="a" style="left:1073px;top:774px" width="16" height="16" viewBox="0 0 16 16"><circle cx="8" cy="8" r="7.5" fill="#1a3aa8" stroke="#c0c8e0"/><text x="4.5" y="12.5" font-family="Liberation Sans" font-weight="bold" font-size="11" fill="#fff">?</text></svg>
<svg class="a" style="left:1097px;top:773px" width="10" height="20" viewBox="0 0 10 20"><rect x="2.5" y="1.5" width="5" height="3" fill="none" stroke="#fff"/><rect x="0.5" y="3.5" width="5" height="3" fill="#222" stroke="#fff"/><path d="M1 15h7L4.5 19z" fill="#fff"/></svg>
<svg class="a" style="left:1114px;top:777px" width="8" height="10" viewBox="0 0 8 10"><path d="M7 1L2 5l5 4" stroke="#dfe4f0" stroke-width="2" fill="none"/></svg>
<svg class="a" style="left:1130px;top:773px;shape-rendering:auto" width="17" height="19" viewBox="0 0 17 19"><ellipse cx="7" cy="5" rx="4.5" ry="4.5" fill="#111"/><ellipse cx="7" cy="12" rx="6" ry="6" fill="#111"/><ellipse cx="7" cy="13" rx="4" ry="4.5" fill="#fff"/><path d="M2 9h10v2H2z" fill="#e02828"/><circle cx="5.5" cy="4.5" r="1" fill="#fff"/><circle cx="8.5" cy="4.5" r="1" fill="#fff"/><ellipse cx="7" cy="7" rx="2" ry="1" fill="#f0a020"/><ellipse cx="4" cy="18" rx="3" ry="1.2" fill="#f0a020"/><circle cx="12" cy="14" r="4.5" fill="#f0a040" stroke="#b06010" stroke-width=".6"/><path d="M9.5 13h5M9.5 15.5h5" stroke="#fff" stroke-width="1"/></svg>
<svg class="a" style="left:1148px;top:773px;shape-rendering:auto" width="17" height="19" viewBox="0 0 17 19"><ellipse cx="7" cy="5" rx="4.5" ry="4.5" fill="#111"/><ellipse cx="7" cy="12" rx="6" ry="6" fill="#111"/><ellipse cx="7" cy="13" rx="4" ry="4.5" fill="#fff"/><path d="M2 9h10v2H2z" fill="#e02828"/><circle cx="5.5" cy="4.5" r="1" fill="#fff"/><circle cx="8.5" cy="4.5" r="1" fill="#fff"/><ellipse cx="7" cy="7" rx="2" ry="1" fill="#f0a020"/><ellipse cx="4" cy="18" rx="3" ry="1.2" fill="#f0a020"/><circle cx="12" cy="14" r="4.5" fill="#f0a040" stroke="#b06010" stroke-width=".6"/><path d="M9.5 13h5M9.5 15.5h5" stroke="#fff" stroke-width="1"/></svg>
<svg class="a" style="left:1175px;top:773px" width="16" height="19" viewBox="0 0 16 19"><path d="M4 1v5M9 1v5" stroke="#ddd" stroke-width="1.5"/><rect x="2" y="5" width="9" height="7" fill="#eee"/><rect x="5" y="12" width="3" height="6" fill="#eee"/><path d="M8 12l7 6M15 12l-7 6" stroke="#e02020" stroke-width="2"/></svg>
<svg class="a" style="left:1193px;top:773px" width="18" height="19" viewBox="0 0 18 19"><rect x="4.5" y="0.5" width="11" height="9" fill="#2a6ad0" stroke="#ddd"/><rect x="0.5" y="5.5" width="11" height="9" fill="#2a6ad0" stroke="#ddd"/><circle cx="12" cy="14" r="4.5" fill="#30a040"/><circle cx="12" cy="14" r="2.5" fill="#3a8ae0"/></svg>
<svg class="a" style="left:1212px;top:773px" width="16" height="18" viewBox="0 0 16 18"><path d="M1 6h3l5-5v16l-5-5H1z" fill="#d8dce8"/><path d="M11 6q2 3 0 6M13 4q3 5 0 10" stroke="#60c040" stroke-width="1.2" fill="none"/></svg>
<div class="t" style="left:1235px;top:777px;color:#fff;font-size:13px;line-height:15px">18:11</div>
</body></html>
